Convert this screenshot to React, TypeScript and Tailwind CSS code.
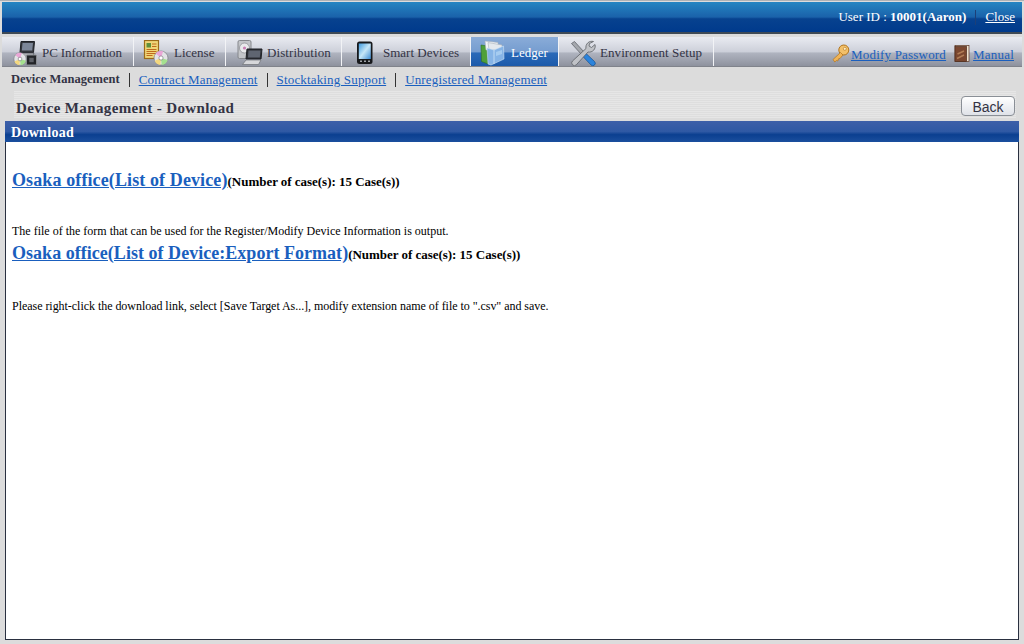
const serif = "font-['Liberation_Serif','Times_New_Roman',serif]";

function Disc({ cx, cy, r }: { cx: number; cy: number; r: number }) {
  return (
    <g>
      <circle cx={cx} cy={cy} r={r} fill="#e2e3e6" stroke="#7c7e84" strokeWidth="0.7" />
      <path d={`M${cx} ${cy} L${cx - r * 0.75} ${cy - r * 0.65} A${r} ${r} 0 0 1 ${cx + r * 0.3} ${cy - r * 0.95} Z`} fill="#eaa6d6" />
      <path d={`M${cx} ${cy} L${cx + r * 0.95} ${cy + r * 0.3} A${r} ${r} 0 0 1 ${cx + r * 0.1} ${cy + r} Z`} fill="#a4e08e" />
      <path d={`M${cx} ${cy} L${cx - r * 0.1} ${cy + r} A${r} ${r} 0 0 1 ${cx - r * 0.9} ${cy + r * 0.4} Z`} fill="#f3d77e" />
      <circle cx={cx} cy={cy} r={r * 0.3} fill="#fff" stroke="#6d6f74" strokeWidth="0.6" />
    </g>
  );
}

function PcIcon() {
  return (
    <svg width="26" height="26" viewBox="0 0 26 26" className="shrink-0">
      <path d="M9 1.5 L22.5 1.5 L21.5 12.5 L8 12.5 Z" fill="#33363d" stroke="#1e2026" />
      <path d="M10.5 3 L21 3 L20.2 10.5 L9.8 10.5 Z" fill="#7c8698" />
      <path d="M7 13 L22 13 L20.5 17 L5 17 Z" fill="#aeb0b5" stroke="#4c4f56" strokeWidth="0.7" />
      <Disc cx={8} cy={19} r={6.2} />
      <rect x="14.5" y="15" width="10" height="10" rx="1" fill="#222428" stroke="#8a8d92" />
      <rect x="17.3" y="17.8" width="4.4" height="4.4" fill="#5d6066" />
    </svg>
  );
}

function LicenseIcon() {
  return (
    <svg width="26" height="26" viewBox="0 0 26 26" className="shrink-0">
      <rect x="1.5" y="0.5" width="14" height="18" fill="#f0d779" stroke="#9b6a18" strokeWidth="1.2" />
      <rect x="3.5" y="3" width="4.5" height="4.5" fill="#5f8f3c" />
      <path d="M9 4h4.5M9 6.5h4.5M3.5 9.5h10M3.5 11.5h10M3.5 13.5h10M3.5 15.5h6" stroke="#bf6a1c" strokeWidth="1" />
      <Disc cx={18} cy={18} r={7} />
    </svg>
  );
}

function DistributionIcon() {
  return (
    <svg width="26" height="26" viewBox="0 0 26 26" className="shrink-0">
      <rect x="1" y="0.5" width="13" height="18" rx="1.5" fill="#c3c5c9" stroke="#85878c" />
      <circle cx="7.5" cy="8" r="5" fill="#e8e9eb" stroke="#85878c" strokeWidth="0.7" />
      <circle cx="7.5" cy="8" r="1.6" fill="#c97fb5" />
      <path d="M10 9 L25 9 L24 19 L9 19 Z" fill="#2d2f35" stroke="#1f2126" />
      <path d="M11.5 10.5 L23.5 10.5 L22.8 17.5 L11 17.5 Z" fill="#5f6571" />
      <path d="M9 20 L24 20 L21.5 24.5 L5.5 24.5 Z" fill="#d6d7da" stroke="#6f7176" strokeWidth="0.7" />
    </svg>
  );
}

function PhoneIcon() {
  return (
    <svg width="18" height="24" viewBox="0 0 18 24" className="shrink-0">
      <defs>
        <linearGradient id="screen" x1="0" y1="0" x2="1" y2="1">
          <stop offset="0" stopColor="#3f9be0" />
          <stop offset="0.5" stopColor="#c6e6f7" />
          <stop offset="1" stopColor="#3f8dd4" />
        </linearGradient>
      </defs>
      <rect x="1" y="0.5" width="15.5" height="22.5" rx="2.5" fill="#17181b" />
      <rect x="2.8" y="2.5" width="12" height="15.5" fill="url(#screen)" />
      <path d="M4 20.3h2M8 20.3h2M12 20.3h2" stroke="#a0a3a8" strokeWidth="1.4" />
    </svg>
  );
}

function LedgerIcon() {
  return (
    <svg width="26" height="26" viewBox="0 0 26 26" className="shrink-0">
      <path d="M1 5 L7 6 L8 24 L1.5 21.5 Z" fill="#4fa03a" stroke="#2f6d25" strokeWidth="0.6" />
      <path d="M5 1 L18 2.5 L18 10 L6 10 Z" fill="#f3f5f7" stroke="#aab2bb" strokeWidth="0.6" />
      <path d="M8 2.5 L22 5 L22 10 L9 10 Z" fill="#e4e9ee" stroke="#aab2bb" strokeWidth="0.6" />
      <path d="M7 8 L14 10 L23.5 6 L24 19 L11 25 L8 24 Z" fill="#86b4e6" stroke="#cfe2f5" strokeWidth="0.6" />
      <path d="M14 10 L14 24" stroke="#c0dbf4" strokeWidth="1" />
      <path d="M16 12 L22 10 L22 14 L16 16 Z" fill="#a6ccf0" />
    </svg>
  );
}

function ToolsIcon() {
  return (
    <svg width="26" height="26" viewBox="0 0 26 26" className="shrink-0">
      <path d="M1.5 3.5 L4.5 1.5 L14.5 12.5 L12 15 Z" fill="#a4a7ad" stroke="#55585e" strokeWidth="0.7" />
      <path d="M11.5 15 L14.5 12 L24.5 21.5 A2.2 2.2 0 0 1 21 25 Z" fill="#2c84dc" stroke="#17508f" strokeWidth="0.7" />
      <path d="M23.5 1.5 A6 6 0 0 0 16 8.5 L2.5 21 A2.6 2.6 0 0 0 6.3 24.8 L18 12 A6 6 0 0 0 25 4.5 L21.5 7.5 L19 6 L19.5 3.5 Z" fill="#c0c2c7" stroke="#5c5f65" strokeWidth="0.8" />
    </svg>
  );
}

function KeyIcon() {
  return (
    <svg width="18" height="19" viewBox="0 0 18 19" className="shrink-0">
      <circle cx="11.8" cy="6" r="5" fill="#f2c06a" stroke="#b2741c" />
      <circle cx="12.8" cy="4.8" r="1.5" fill="#fff0c8" stroke="#b2741c" strokeWidth="0.6" />
      <path d="M8.5 8.5 L1 15.5 L2.8 18 L4.5 16.5 L5.8 17 L6.5 14.8 L8 14.5 L11 11 Z" fill="#f0b458" stroke="#b2741c" strokeWidth="0.7" />
    </svg>
  );
}

function BookIcon() {
  return (
    <svg width="16" height="17" viewBox="0 0 16 17" className="shrink-0">
      <rect x="1" y="0.5" width="14" height="16" fill="#efe3d2" stroke="#5a3320" strokeWidth="0.7" />
      <rect x="1" y="1.5" width="11.5" height="15" fill="#7a4730" stroke="#4b2a1b" strokeWidth="0.7" />
      <path d="M3.5 9 L10 6 M3 13.5 L10 10" stroke="#b07c56" strokeWidth="1.4" />
    </svg>
  );
}

const tabs = [
  { label: "PC Information", icon: <PcIcon />, w: "w-[132px]", gap: "gap-[4px]", pl: "pl-[10px]", track: "tracking-[-0.1px]" },
  { label: "License", icon: <LicenseIcon />, w: "w-[92px]", gap: "gap-[5px]", pl: "pl-[9px]", track: "" },
  { label: "Distribution", icon: <DistributionIcon />, w: "w-[116px]", gap: "gap-[4px]", pl: "pl-[11px]", track: "tracking-[0.08px]" },
  { label: "Smart Devices", icon: <PhoneIcon />, w: "w-[129px]", gap: "gap-[9px]", pl: "pl-[14px]", track: "" },
  { label: "Ledger", icon: <LedgerIcon />, w: "w-[88px]", gap: "gap-[5px]", pl: "pl-[9px]", track: "", active: true },
  { label: "Environment Setup", icon: <ToolsIcon />, w: "w-[155px]", gap: "gap-[4px]", pl: "pl-[11px]", track: "tracking-[0.08px]" },
];

const subLinks = ["Contract Management", "Stocktaking Support", "Unregistered Management"];

export default function App() {
  return (
    <div className={`${serif} h-[644px] w-[1024px] overflow-hidden border-t border-[#aeb2b6] bg-[#dcdcdc] pl-[2px] pr-[2px] pt-[1px] text-[13px]`}>
      <div className="flex h-[30px] items-center justify-end bg-[linear-gradient(to_bottom,#2585c2_0%,#1a62aa_50%,#07428f_56%,#003a8c_100%)] pr-[7px] text-white">
        <span>User ID : <b>10001(Aaron)</b></span>
        <span className="mx-[9px] h-[15px] w-px bg-[#1d3f77]" />
        <a className="underline">Close</a>
      </div>
      <div className="h-[2px] bg-[#3f4a55]" />
      <div className="mt-[3px] flex h-[30px] items-stretch border-b border-[#80838b] bg-[linear-gradient(to_bottom,#e9ebf1_0%,#cdd0da_50%,#afb3bf_56%,#8e929e_100%)]">
        {tabs.map((t) => (
          <div
            key={t.label}
            className={`flex items-center border-r border-[#f2f3f6] pt-[3px] ${t.track} ${t.w} ${t.gap} ${t.pl} ${
              t.active
                ? "bg-[linear-gradient(to_bottom,#8aacd8_0%,#769dd0_50%,#2a69b8_56%,#1c5aaa_100%)] text-white"
                : "text-[#333344]"
            }`}
          >
            {t.icon}
            <span className="whitespace-nowrap">{t.label}</span>
          </div>
        ))}
        <div className="ml-auto flex items-center pr-[8px] pt-[3px] tracking-[0.2px] text-[#1a5fbe]">
          <KeyIcon />
          <a className="ml-px pt-[3px] underline">Modify Password</a>
          <span className="ml-[8px]"><BookIcon /></span>
          <a className="ml-[3px] pt-[3px] underline">Manual</a>
        </div>
      </div>
      <div className="flex h-[24px] items-center pl-[9px] pt-[1px]">
        <b className="text-[12.5px] text-[#333344]">Device Management</b>
        {subLinks.map((l) => (
          <span key={l} className="flex items-center">
            <span className="mx-[9px] h-[14px] w-px bg-[#333]" />
            <a className="tracking-[0.16px] text-[#1a5fbe] underline">{l}</a>
          </span>
        ))}
      </div>
      <div className="ml-[12px] mr-[6px] flex h-[27px] items-center justify-between bg-[repeating-linear-gradient(to_bottom,#e6e6e6_0px,#e6e6e6_1px,#dedede_1px,#dedede_2px)] pl-[2px] pr-px">
        <b className="pt-[8px] text-[15px] tracking-[0.37px] text-[#333344]">Device Management - Download</b>
        <button className="mt-[3px] h-[20px] w-[54px] rounded-[4px] border border-[#8a8f96] bg-gradient-to-b from-[#ffffff] to-[#dfe2e8] font-['Liberation_Sans',Arial,sans-serif] text-[14px] text-[#333344]">
          Back
        </button>
      </div>
      <div className="ml-[3px] mr-[3px] mt-[3px] flex h-[21px] items-center bg-[linear-gradient(to_bottom,#3d5fa8_0%,#2f59a4_50%,#0b3f90_65%,#1b4f9e_100%)] pl-[6px] pt-[1px] text-[14px] font-bold tracking-[0.3px] text-white">
        Download
      </div>
      <div className="ml-[3px] mr-[3px] h-[498px] border-x border-b border-[#2a3040] bg-white pl-[6px] text-black">
        <div className="flex pt-[25px]">
          <a className="text-[18px] font-bold tracking-[0.11px] text-[#1a5fbe] underline">Osaka office(List of Device)</a>
          <b className="mt-[5px] tracking-[-0.03px]">(Number of case(s): 15 Case(s))</b>
        </div>
        <p className="mt-[30px] text-[12px] leading-[14px]">The file of the form that can be used for the Register/Modify Device Information is output.</p>
        <div className="mt-[2px] flex">
          <a className="text-[18px] font-bold tracking-[0.03px] text-[#1a5fbe] underline">Osaka office(List of Device:Export Format)</a>
          <b className="mt-[5px] tracking-[-0.03px]">(Number of case(s): 15 Case(s))</b>
        </div>
        <p className="mt-[32px] text-[12px] leading-[14px] tracking-[-0.04px]">Please right-click the download link, select [Save Target As...], modify extension name of file to ".csv" and save.</p>
      </div>
    </div>
  );
}
